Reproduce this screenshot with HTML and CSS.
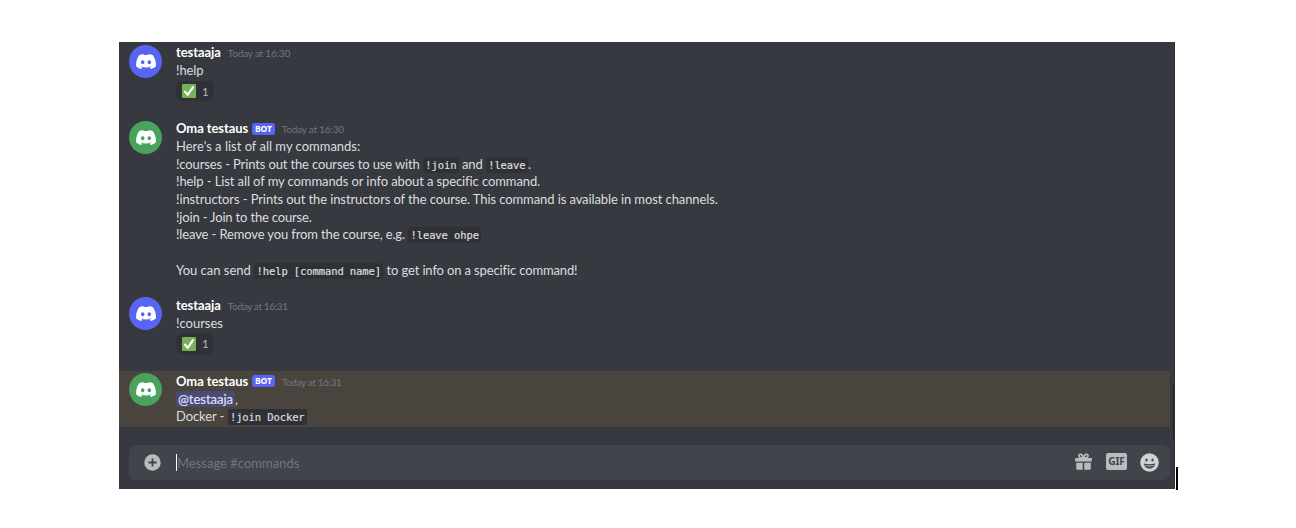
FILE: index.html
```
<!DOCTYPE html>
<html lang="en">
<head>
<meta charset="utf-8">
<title>#commands</title>
<link rel="stylesheet" href="styles.css">
</head>
<body>
<svg class="defs" width="0" height="0">
  <symbol id="face" viewBox="0 0 127 96"><path fill="currentColor" fill-rule="evenodd" d="M107.7 8.07A105.15 105.15 0 0 0 81.47 0a72.06 72.06 0 0 0-3.36 6.83 97.68 97.68 0 0 0-29.11 0A72.37 72.37 0 0 0 45.64 0 105.89 105.89 0 0 0 19.39 8.09C2.79 32.65-1.71 56.6.54 80.21a105.73 105.73 0 0 0 32.17 16.15 77.7 77.7 0 0 0 6.89-11.11 68.42 68.42 0 0 1-10.85-5.18c.91-.66 1.8-1.34 2.66-2a75.57 75.57 0 0 0 64.32 0c.87.71 1.76 1.39 2.66 2a68.68 68.68 0 0 1-10.87 5.19 77 77 0 0 0 6.89 11.1 105.25 105.25 0 0 0 32.19-16.14c2.64-27.38-4.51-51.11-18.9-72.15zM42.45 65.69C36.18 65.69 31 60 31 53s5-12.74 11.43-12.74S54 46 53.89 53s-5.05 12.69-11.44 12.69zm42.24 0C78.41 65.69 73.25 60 73.25 53s5-12.74 11.44-12.74S96.23 46 96.12 53s-5.04 12.69-11.43 12.69z"/></symbol>
  <symbol id="check" viewBox="0 0 14 14"><rect width="14" height="14" rx="1.2" fill="#78b159"/><path d="M3 7.6 5.7 10.8 11 3.2" fill="none" stroke="#fff" stroke-width="2.1" stroke-linecap="round" stroke-linejoin="round"/></symbol>
</svg>
<main class="window">
  <section class="messages">
    <article class="message">
      <div class="avatar user"><svg><use href="#face"/></svg></div>
      <div class="body">
        <div class="line"><b class="name">testaaja</b><time>Today at 16:30</time></div>
        <div class="line">!help</div>
        <div class="reaction"><svg><use href="#check"/></svg><span>1</span></div>
      </div>
    </article>
    <article class="message">
      <div class="avatar bot"><svg><use href="#face"/></svg></div>
      <div class="body">
        <div class="line"><b class="name">Oma testaus</b><span class="tag">BOT</span><time>Today at 16:30</time></div>
        <div class="line loose">Here's a list of all my commands:</div>
        <div class="line snug">!courses - Prints out the courses to use with <code>!join</code> and <code>!leave</code>.</div>
        <div class="line">!help - List all of my commands or info about a specific command.</div>
        <div class="line">!instructors - Prints out the instructors of the course. This command is available in most channels.</div>
        <div class="line tight">!join - Join to the course.</div>
        <div class="line snug">!leave - Remove you from the course, e.g. <code>!leave ohpe</code></div>
        <div class="line"></div>
        <div class="line"><span class="loose">You can send </span><code>!help [command name]</code><span class="snug"> to get info on a specific command!</span></div>
      </div>
    </article>
    <article class="message">
      <div class="avatar user"><svg><use href="#face"/></svg></div>
      <div class="body">
        <div class="line"><b class="name">testaaja</b><time class="narrow">Today at 16:31</time></div>
        <div class="line loose">!courses</div>
        <div class="reaction"><svg><use href="#check"/></svg><span>1</span></div>
      </div>
    </article>
    <article class="message mentioned">
      <div class="avatar bot"><svg><use href="#face"/></svg></div>
      <div class="body">
        <div class="line"><b class="name">Oma testaus</b><span class="tag">BOT</span><time class="narrow">Today at 16:31</time></div>
        <div class="line loose"><span class="mention">@testaaja</span>,</div>
        <div class="line">Docker - <code>!join Docker</code></div>
      </div>
    </article>
  </section>
  <footer class="composer">
    <svg class="plus" viewBox="0 0 18 18"><circle cx="9" cy="9" r="8.7" fill="#b9bbbe"/><path d="M9 4.7v8.6M4.7 9h8.6" stroke="#40444b" stroke-width="1.9"/></svg>
    <span class="caret"></span>
    <span class="placeholder">Message #commands</span>
    <svg class="gift" viewBox="0 0 17 17"><path d="M8.5 5.2C5.6 5.2 3.7 4.3 3.9 2.6 4.2.6 7.4.4 8.5 5.2 9.6.4 12.8.6 13.1 2.6 13.3 4.3 11.4 5.2 8.5 5.2z" fill="none" stroke="#b9bbbe" stroke-width="1.7"/><path fill="#b9bbbe" d="M.2 5h16.6v3.6H.2zM1.2 9.7h6.5v7.1H2.4a1.2 1.2 0 0 1-1.2-1.2zM9.3 9.7h6.5v5.9a1.2 1.2 0 0 1-1.2 1.2H9.3z"/></svg>
    <span class="gif">GIF</span>
    <svg class="smile" viewBox="0 0 19 19"><circle cx="9.5" cy="9.5" r="9.3" fill="#d0d1d2"/><ellipse cx="6.5" cy="7" rx="1.2" ry="1.6" fill="#40444b"/><ellipse cx="12.5" cy="7" rx="1.2" ry="1.6" fill="#40444b"/><path d="M3.9 10.5c3.5 1 7.7 1 11.2 0-.3 3-2.6 5-5.6 5s-5.3-2-5.6-5z" fill="#40444b"/><path d="M5.2 11.9c2.8.7 5.8.7 8.6 0l-.7 1.2c-2.3.5-4.900.5-7.200 0z" fill="#d0d1d2"/></svg>
  </footer>
  <div class="scroll-thumb"></div>
</main>
<div class="page-cursor"></div>
</body>
</html>
```
FILE: styles.css
```
* { box-sizing: border-box; }
body {
  margin: 0;
  padding: 42px 0 0 119px;
  display: flex;
  align-items: flex-start;
  background: #fff;
  font-family: Lato, "Noto Sans", sans-serif;
  font-size: 13px;
  color: #dcddde;
}
.defs { position: absolute; }
.window {
  position: relative;
  width: 1056px;
  height: 447px;
  background: #36393f;
  border-right: 1px solid #2e3136;
  overflow: hidden;
}
.scroll-thumb {
  position: absolute;
  top: 342px;
  right: -1px;
  width: 2px;
  height: 57px;
  border-radius: 1px;
  background: #202225;
}
.messages {
  display: flex;
  flex-direction: column;
  gap: 14.3px;
  height: 403px;
}
.message {
  display: flex;
  gap: 14px;
  width: 1051px;
  padding: 2.3px 0 0.9px 10px;
}
.mentioned { background: #49443e; }
.avatar {
  width: 33px;
  height: 33px;
  margin-top: 0.3px;
  border-radius: 50%;
  color: #fff;
  display: flex;
  align-items: center;
  justify-content: center;
}
.avatar svg { width: 20px; height: 15px; }
.user { background: #5865f2; }
.bot { background: #4aa35c; }
.line {
  height: 17.7px;
  line-height: 17.7px;
  white-space: pre;
  letter-spacing: -0.1px;
}
.snug { letter-spacing: -0.135px; }
.tight { letter-spacing: -0.17px; }
.loose { letter-spacing: -0.01px; }
.name { color: #fff; font-weight: 700; letter-spacing: -0.07px; }
time {
  margin-left: 7px;
  font-size: 10px;
  letter-spacing: -0.2px;
  color: #72767d;
}
.narrow { letter-spacing: -0.37px; }
.tag {
  display: inline-block;
  width: 22.5px;
  height: 12px;
  margin-left: 4px;
  border-radius: 2.5px;
  background: #5865f2;
  color: #fff;
  font: 700 8.5px/12px "Noto Sans", sans-serif;
  letter-spacing: -0.1px;
  text-align: center;
  vertical-align: 1.6px;
}
code {
  padding: 2px 2.4px;
  border-radius: 3px;
  background: #2f3136;
  font: 10.5px/13px "DejaVu Sans Mono", monospace;
  letter-spacing: -0.1px;
  -webkit-text-stroke: 0.2px currentColor;
}
.mention {
  padding: 0 2px;
  border-radius: 2.5px;
  background: #4b4a70;
  color: #dee0fc;
  -webkit-text-stroke: 0.2px currentColor;
}
.reaction {
  display: flex;
  align-items: center;
  gap: 6px;
  width: 38px;
  height: 20px;
  margin: 1.4px 0 1.8px;
  padding-left: 6px;
  border-radius: 6px;
  background: #2f3136;
  font-size: 11.5px;
  color: #b9bbbe;
}
.reaction svg { width: 14px; height: 14px; }
.composer {
  display: flex;
  align-items: center;
  height: 35px;
  margin: 0 4px 0 10px;
  padding: 0 11px 0 15px;
  border-radius: 7px;
  background: #40444b;
}
.plus { width: 17px; height: 17px; }
.caret { width: 1px; height: 17px; margin-left: 15px; background: #fff; }
.placeholder { flex: 1; color: #72767d; }
.gift { width: 17px; height: 17px; margin-top: -2px; }
.gif {
  width: 21px;
  height: 17px;
  margin: -2px 13px 0 14.5px;
  border-radius: 2px;
  background: #b9bbbe;
  color: #40444b;
  font: 700 10px/17px "Noto Sans", sans-serif;
  text-align: center;
}
.smile { width: 19px; height: 19px; }
.page-cursor {
  width: 2px;
  height: 23px;
  margin: 425px 0 0 1px;
  background: #000;
}
```
